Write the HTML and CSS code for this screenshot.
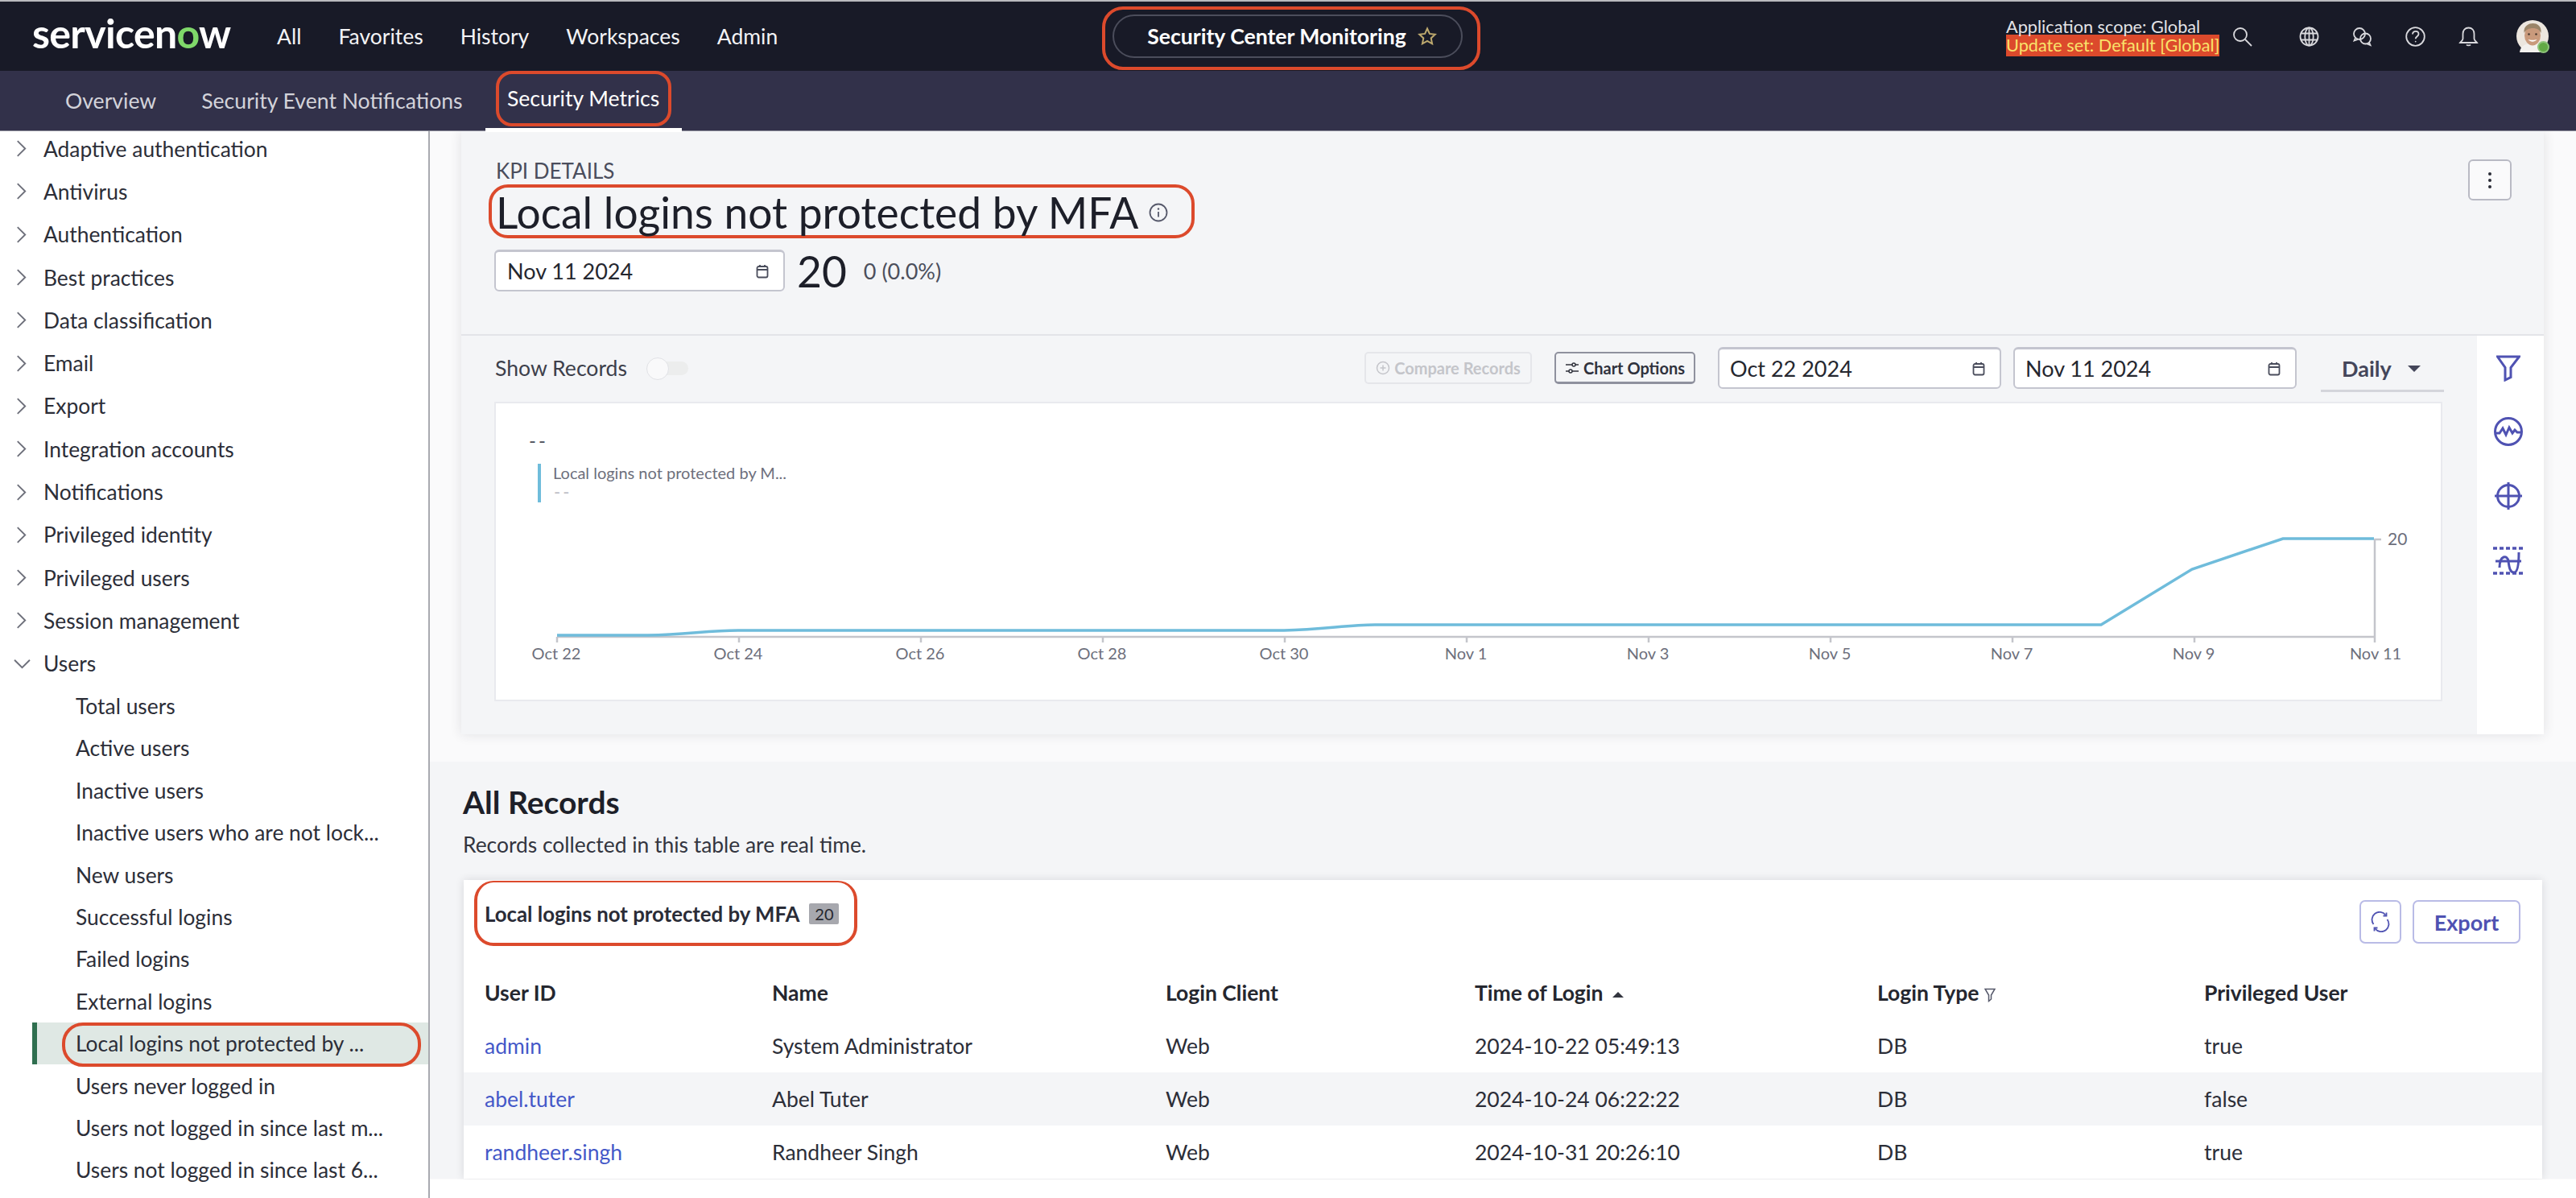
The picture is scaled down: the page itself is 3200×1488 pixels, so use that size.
FILE: index.html
```html
<!DOCTYPE html>
<html lang="en">
<head>
<meta charset="utf-8">
<title>Security Center Monitoring</title>
<link rel="stylesheet" href="styles.css">
</head>
<body>
<header class="topbar">
  <div class="top-left">
    <div class="logo">servicen<span class="logo-o">o</span>w</div>
    <nav class="top-nav"><a>All</a><a>Favorites</a><a>History</a><a>Workspaces</a><a>Admin</a></nav>
  </div>
  <div class="top-center">
    <div class="pill">
      <span>Security Center Monitoring</span>
      <svg class="star" viewBox="0 0 24 24"><path d="M12 2.5l2.9 6.4 6.9.8-5.1 4.7 1.4 6.9-6.1-3.5-6.1 3.5 1.4-6.9-5.1-4.7 6.9-.8z"/></svg>
    </div>
  </div>
  <div class="top-right">
    <div class="scope">
      <div class="scope-app">Application scope: Global</div>
      <div class="scope-set">Update set: Default [Global]</div>
    </div>
    <svg class="ticon ticon-search" viewBox="0 0 25 25"><circle cx="10" cy="10" r="8"/><path d="M16 16l8 8"/></svg>
    <svg class="ticon" viewBox="0 0 25 25"><circle cx="12.5" cy="12.5" r="11"/><ellipse cx="12.5" cy="12.5" rx="5.2" ry="11"/><path d="M2 8.5h21M2 16.5h21M12.5 1.5v22"/></svg>
    <svg class="ticon" viewBox="0 0 25 25"><circle cx="9" cy="9" r="7"/><path d="M4 14l-1.5 3.5L7 16"/><circle cx="16.5" cy="15" r="6.5"/><path d="M21 19.5l1.5 3.5-4-1.7"/></svg>
    <svg class="ticon" viewBox="0 0 25 25"><circle cx="12.5" cy="12.5" r="11.3"/><path d="M9 9.5c0-5 7.5-4.6 7.5-.3 0 3-3.8 3-3.8 6"/><circle class="dot" cx="12.7" cy="18.6" r=".9"/></svg>
    <svg class="ticon ticon-bell" viewBox="0 0 25 25"><path d="M12.5 1.5c-4.4 0-7 3.200-7 7.500v6c0 2.300-2.300 3.200-3.500 5h21c-1.200-1.800-3.500-2.700-3.500-5V9c0-4.300-2.600-7.500-7-7.500z"/><path d="M10 22.500c1 1.200 4 1.200 5 0"/></svg>
    <div class="avatar">
      <svg viewBox="0 0 40 40">
        <circle cx="20" cy="20" r="20" fill="#ece6de"/>
        <path d="M4 40c1-9 8-11 16-11s15 2 16 11z" fill="#f3f1ee"/>
        <ellipse cx="20" cy="19" rx="10" ry="12.500" fill="#c99a7c"/>
        <path d="M9.500 16c-1-9 6-12 11-12s11 3 10 12c-2-4-5-6-10-6s-9 2-11 6z" fill="#9a8468"/>
        <path d="M14.500 24c3 3.500 8 3.500 11 0-2 1-9 1-11 0z" fill="#fff"/>
        <circle cx="15.500" cy="17.500" r="1.300" fill="#4a3a30"/><circle cx="24.500" cy="17.500" r="1.300" fill="#4a3a30"/>
      </svg>
      <span class="avatar-badge"></span>
    </div>
  </div>
</header>

<div class="subnav">
  <a class="tab">Overview</a>
  <a class="tab">Security Event Notifications</a>
  <a class="tab tab-active"><span class="ring ring-tab">Security Metrics</span></a>
</div>

<div class="body-row">
  <aside class="sidebar">
    <div class="parent"><svg class="chev" viewBox="0 0 12 20"><path d="M1.500 1l9 9-9 9"/></svg>Adaptive authentication</div>
    <div class="parent"><svg class="chev" viewBox="0 0 12 20"><path d="M1.500 1l9 9-9 9"/></svg>Antivirus</div>
    <div class="parent"><svg class="chev" viewBox="0 0 12 20"><path d="M1.500 1l9 9-9 9"/></svg>Authentication</div>
    <div class="parent"><svg class="chev" viewBox="0 0 12 20"><path d="M1.500 1l9 9-9 9"/></svg>Best practices</div>
    <div class="parent"><svg class="chev" viewBox="0 0 12 20"><path d="M1.500 1l9 9-9 9"/></svg>Data classification</div>
    <div class="parent"><svg class="chev" viewBox="0 0 12 20"><path d="M1.500 1l9 9-9 9"/></svg>Email</div>
    <div class="parent"><svg class="chev" viewBox="0 0 12 20"><path d="M1.500 1l9 9-9 9"/></svg>Export</div>
    <div class="parent"><svg class="chev" viewBox="0 0 12 20"><path d="M1.500 1l9 9-9 9"/></svg>Integration accounts</div>
    <div class="parent"><svg class="chev" viewBox="0 0 12 20"><path d="M1.500 1l9 9-9 9"/></svg>Notifications</div>
    <div class="parent"><svg class="chev" viewBox="0 0 12 20"><path d="M1.500 1l9 9-9 9"/></svg>Privileged identity</div>
    <div class="parent"><svg class="chev" viewBox="0 0 12 20"><path d="M1.500 1l9 9-9 9"/></svg>Privileged users</div>
    <div class="parent"><svg class="chev" viewBox="0 0 12 20"><path d="M1.500 1l9 9-9 9"/></svg>Session management</div>
    <div class="parent"><svg class="chev chev-open" viewBox="0 0 20 12"><path d="M1 1.500l9 9 9-9"/></svg>Users</div>
    <div class="child">Total users</div>
    <div class="child">Active users</div>
    <div class="child">Inactive users</div>
    <div class="child">Inactive users who are not lock...</div>
    <div class="child">New users</div>
    <div class="child">Successful logins</div>
    <div class="child">Failed logins</div>
    <div class="child">External logins</div>
    <div class="child child-active">Local logins not protected by ...<span class="ring-side"></span></div>
    <div class="child">Users never logged in</div>
    <div class="child">Users not logged in since last m...</div>
    <div class="child">Users not logged in since last 6...</div>
  </aside>

  <main class="main">
    <section class="panel">
      <div class="kpi-head">
        <div class="kpi-info">
          <div class="eyebrow">KPI DETAILS</div>
          <div class="ring ring-title">
            <h1>Local logins not protected by MFA</h1>
            <svg class="info" viewBox="0 0 24 24"><circle cx="12" cy="12" r="10.500"/><path d="M12 11v6.500"/><circle class="dot" cx="12" cy="7.500" r="1.200"/></svg>
          </div>
          <div class="kpi-value">
            <div class="date date-kpi"><span>Nov 11 2024</span><svg class="cal" viewBox="0 0 16 18"><rect x="1.500" y="3" width="13" height="13.500" rx="2"/><path d="M1.500 7h13M5 1v3M11 1v3"/></svg></div>
            <span class="bignum">20</span>
            <span class="delta">0 (0.0%)</span>
          </div>
        </div>
        <button class="kebab"><span></span><span></span><span></span></button>
      </div>

      <div class="chart-row">
        <div class="chart-col">
          <div class="toolbar">
            <span class="show-label">Show Records</span>
            <span class="toggle"></span>
            <button class="btn btn-disabled"><svg viewBox="0 0 18 18"><circle cx="9" cy="9" r="7.500"/><path d="M9 5.500v7M5.500 9h7"/></svg>Compare Records</button>
            <button class="btn btn-options"><svg viewBox="0 0 18 18"><path d="M1 5h8M13 5h4M1 13h4M9 13h8"/><circle cx="11" cy="5" r="2"/><circle cx="7" cy="13" r="2"/></svg>Chart Options</button>
            <div class="date date-range"><span>Oct 22 2024</span><svg class="cal" viewBox="0 0 16 18"><rect x="1.500" y="3" width="13" height="13.500" rx="2"/><path d="M1.500 7h13M5 1v3M11 1v3"/></svg></div>
            <div class="date date-range date-end"><span>Nov 11 2024</span><svg class="cal" viewBox="0 0 16 18"><rect x="1.500" y="3" width="13" height="13.500" rx="2"/><path d="M1.500 7h13M5 1v3M11 1v3"/></svg></div>
            <div class="daily"><span>Daily</span><i class="caret"></i></div>
          </div>
          <div class="chart-card">
            <svg class="chart" viewBox="0 0 2420 372">
              <text class="c-dash" x="43" y="57">--</text>
              <rect class="c-legend" x="54" y="77" width="4" height="48"/>
              <text class="c-legend-t" x="73" y="96">Local logins not protected by M...</text>
              <text class="c-dash2" x="74" y="120">--</text>
              <path class="c-axis" d="M78 292H2336V170M78 292v7M304 292v7M530 292v7M756 292v7M982 292v7M1208 292v7M1434 292v7M1660 292v7M1886 292v7M2112 292v7M2336 292v7M2336 171h8"/>
              <path class="c-line" d="M78 290H191C240 289 265 284 303 284H981C1030 283 1060 277 1094 277H1996L2109 208 2222 170H2335"/>
              <g class="c-lab">
                <text x="77" y="320">Oct 22</text><text x="303" y="320">Oct 24</text><text x="529" y="320">Oct 26</text><text x="755" y="320">Oct 28</text><text x="981" y="320">Oct 30</text><text x="1207" y="320">Nov 1</text><text x="1433" y="320">Nov 3</text><text x="1659" y="320">Nov 5</text><text x="1885" y="320">Nov 7</text><text x="2111" y="320">Nov 9</text><text x="2337" y="320">Nov 11</text>
              </g>
              <text class="c-y" x="2352" y="178">20</text>
            </svg>
          </div>
        </div>
        <div class="rail">
          <svg class="r-filter" viewBox="0 0 30 33"><path d="M1.500 2h27L18 15.500v12l-7 3.500V15.500z"/></svg>
          <svg class="r-icon" viewBox="0 0 36 36"><circle cx="18" cy="18" r="16.500"/><path d="M2 20h5l4-6 4 8 4-9 4 7 3-4 3 3h5"/></svg>
          <svg class="r-icon" viewBox="0 0 36 36"><circle cx="18" cy="18" r="13.500"/><path d="M18 1v34M1 18h34"/></svg>
          <svg class="r-icon r-band" viewBox="0 0 38 37"><path class="r-dash" d="M0 3h38M0 34h38"/><path d="M3 19h32"/><path d="M8 27c0-16 10-16 11-8s2 14 7 14 6-12 6-25" /></svg>
        </div>
      </div>
    </section>

    <section class="records">
      <h2>All Records</h2>
      <p>Records collected in this table are real time.</p>
      <div class="card">
        <div class="card-head">
          <div class="ring ring-card"><strong>Local logins not protected by MFA</strong><span class="count">20</span></div>
          <div class="card-actions">
            <button class="ghost ghost-icon"><svg viewBox="0 0 26 26"><path d="M4.500 16a9 9 0 0 1 15-11.500M21.500 10a9 9 0 0 1-15 11.500"/><path d="M20.500 1.500v4h-4M5.500 24.500v-4h4"/></svg></button>
            <button class="ghost ghost-text">Export</button>
          </div>
        </div>
        <table>
          <colgroup><col class="c1"><col class="c2"><col class="c3"><col class="c4"><col class="c5"><col class="c6"></colgroup>
          <thead>
            <tr>
              <th>User ID</th><th>Name</th><th>Login Client</th>
              <th>Time of Login <i class="sort"></i></th>
              <th>Login Type <svg class="th-filter" viewBox="0 0 14 18"><path d="M1 1.500h12L8.500 9v5l-3 2.500V9z"/></svg></th>
              <th>Privileged User</th>
            </tr>
          </thead>
          <tbody>
            <tr><td><a>admin</a></td><td>System Administrator</td><td>Web</td><td>2024-10-22 05:49:13</td><td>DB</td><td>true</td></tr>
            <tr class="alt"><td><a>abel.tuter</a></td><td>Abel Tuter</td><td>Web</td><td>2024-10-24 06:22:22</td><td>DB</td><td>false</td></tr>
            <tr><td><a>randheer.singh</a></td><td>Randheer Singh</td><td>Web</td><td>2024-10-31 20:26:10</td><td>DB</td><td>true</td></tr>
          </tbody>
        </table>
      </div>
    </section>
  </main>
</div>
</body>
</html>
```

FILE: styles.css
```css
* { box-sizing: border-box; }
html, body { margin: 0; height: 100%; }
body {
  width: 3200px; height: 1488px; overflow: hidden;
  font-family: "Lato", "Liberation Sans", sans-serif;
  color: #25272f; background: #fff;
  display: flex; flex-direction: column;
  -webkit-font-smoothing: antialiased;
}
h1, h2, p { margin: 0; font-weight: 400; }
button { font-family: inherit; }

/* Top bar */
.topbar {
  height: 88px; flex: none;
  background: #181a27; color: #fff;
  border-top: 2px solid #b9babd;
  display: grid; grid-template-columns: 1369px 470px 1fr;
}
.top-left { display: flex; align-items: center; padding-left: 40px; }
.logo { font-size: 50px; font-weight: 700; letter-spacing: -.7px; line-height: 1; margin-top: -8px; width: 304px; white-space: nowrap; }
.logo-o { color: #7fd86a; }
.top-nav { display: flex; gap: 46px; font-size: 26.500px; color: #f3f3f5; }
.top-center { padding-top: 6px; }
.pill {
  width: 470px; height: 79px;
  border: 4px solid #dc4a2c; border-radius: 26px;
  padding: 6px 22px 6px 24px;
  position: relative;
  display: flex; align-items: center; justify-content: center; gap: 14px;
  font-size: 26.600px; font-weight: 700; white-space: nowrap;
}
.pill::before {
  content: ""; position: absolute; left: 9px; right: 18px; top: 6px; bottom: 11px;
  border: 2px solid #4b4d5b; border-radius: 27px;
}
.pill span, .pill svg { position: relative; top: -3px; }
.star { width: 24px; height: 24px; fill: none; stroke: #bda96e; stroke-width: 2; }
.top-right { display: flex; align-items: center; justify-content: flex-end; gap: 41px; padding-right: 34px; }
.scope { width: 265px; margin-right: -25px; font-size: 21.700px; line-height: 26px; white-space: nowrap; }
.scope-app { color: #e3e3e6; height: 23px; }
.scope-set { background: #dc4a2c; color: #f9e26a; height: 27px; }
.ticon { width: 25px; height: 25px; flex: none; fill: none; stroke: #d9d9dd; stroke-width: 1.800; }
.ticon .dot { fill: #d9d9dd; stroke: none; }
.ticon-search { margin-right: 17px; }
.ticon-bell { margin-right: 6px; }
.avatar { width: 40px; height: 40px; position: relative; flex: none; }
.avatar svg { display: block; width: 40px; height: 40px; }
.avatar-badge { position: absolute; right: -1px; bottom: -1px; width: 15px; height: 15px; background: #62a945; border-radius: 50%; border: 2px solid #8ec47b; }

/* Sub navigation */
.subnav {
  height: 75px; flex: none;
  background: #32314a;
  border-bottom: 1px solid #8e8f9b;
  display: flex; align-items: stretch;
  font-size: 26.600px; color: #d3d3da;
  position: relative;
}
.tab { display: flex; align-items: center; margin-left: 56px; white-space: nowrap; }
.tab:first-child { margin-left: 81px; }
.tab-active { margin-left: 28px; width: 244px; position: relative; justify-content: center; color: #fff; }
.tab-active::after { content: ""; position: absolute; left: 0; right: 0; bottom: -2px; height: 5px; background: #fff; }
.ring { border: 4px solid #dc4a2c; }
.ring-tab { height: 69px; margin-top: -6px; padding: 0 10px; display: flex; align-items: center; border-radius: 20px; width: 218px; justify-content: center; }

/* Layout */
.body-row { flex: 1; display: flex; min-height: 0; }
.sidebar {
  width: 534px; flex: none;
  border-right: 2px solid #a9aab0;
  overflow: hidden; font-size: 26.400px; color: #2c2e38;
}
.parent { height: 53.300px; display: flex; align-items: center; padding-left: 54px; position: relative; white-space: nowrap; }
.chev { position: absolute; left: 20px; width: 13px; height: 21px; fill: none; stroke: #6d6f7a; stroke-width: 1.800; }
.chev-open { width: 21px; height: 13px; left: 17px; }
.parent:first-child { margin-top: -5px; }
.child { height: 52.400px; display: flex; align-items: center; padding-left: 94px; white-space: nowrap; position: relative; }
.child-active { background: #dfe8e4; margin-left: 40px; border-left: 6px solid #2f6f4f; padding-left: 48px; }
.ring-side { position: absolute; left: 31px; top: 0; width: 446px; height: 55px; border: 4px solid #dc4a2c; border-radius: 26px; }

.main {
  flex: 1; height: 1302px; overflow: hidden; min-width: 0;
  background: #fafafb;
  padding-left: 39px;
}
.panel {
  width: 2587px; background: #f4f5f7;
  box-shadow: 0 0 14px rgba(40, 40, 60, .12);
}
.kpi-head { height: 254px; display: flex; justify-content: space-between; padding: 37px 40px 0 41px; border-bottom: 2px solid #e3e4e8; }
.eyebrow { font-size: 26px; color: #4a4d5c; line-height: 24px; margin-left: 2px; }
.ring-title { margin: 5px 0 0 -7px; width: 877px; height: 67px; border-radius: 24px; display: flex; align-items: center; padding-left: 5px; gap: 13px; }
h1 { font-size: 53.300px; color: #1d1f29; line-height: 58px; white-space: nowrap; }
.info { width: 24px; height: 24px; flex: none; fill: none; stroke: #55586a; stroke-width: 1.800; margin-top: 3px; }
.info .dot { fill: #55586a; stroke: none; }
.kpi-value { display: flex; align-items: center; margin-top: 14px; }
.date {
  background: #fff; border: 2px solid #c4c5cf; border-top-width: 3px; border-radius: 6px;
  display: flex; align-items: center; justify-content: space-between;
  font-size: 27px; color: #25272f; white-space: nowrap;
}
.date-kpi { width: 361px; height: 52px; padding: 0 18px 0 14px; }
.cal { width: 16px; height: 18px; fill: none; stroke: #4a4d5c; stroke-width: 1.800; }
.bignum { font-size: 53.300px; margin-left: 15px; line-height: 52px; color: #1d1f29; }
.delta { font-size: 27px; margin-left: 21px; color: #4c4f5c; }
.kebab { width: 54px; height: 51px; margin-top: -2px; background: #fafafb; border: 2px solid #b9bac4; border-radius: 6px; display: flex; flex-direction: column; align-items: center; justify-content: center; gap: 4px; padding: 0; }
.kebab span { width: 4px; height: 4px; border-radius: 50%; background: #2a2c37; }

.chart-row { display: flex; }
.chart-col { width: 2504px; padding-bottom: 41px; }
.toolbar { height: 80px; display: flex; align-items: center; padding: 0 41px 0 42px; }
.show-label { font-size: 26.600px; color: #3d3f4b; }
.toggle { width: 52px; height: 17px; margin-left: 24px; background: #eceded; border-radius: 9px; position: relative; }
.toggle::before { content: ""; position: absolute; left: 0; top: -5px; width: 26px; height: 26px; background: #f9f9fa; border: 1px solid #e1e2e6; border-radius: 50%; }
.btn { height: 40px; border-radius: 5px; background: transparent; display: flex; align-items: center; justify-content: center; gap: 5px; font-size: 20px; font-weight: 700; padding: 0; white-space: nowrap; }
.btn svg { width: 18px; height: 18px; fill: none; stroke-width: 1.500; flex: none; }
.btn-disabled { width: 208px; margin-left: auto; border: 2px solid #e5e6ea; color: #c4c5ca; }
.btn-disabled svg { stroke: #c4c5ca; }
.btn-options { width: 175px; margin-left: 28px; border: 2px solid #8f919e; border-bottom-width: 3px; color: #30323d; }
.btn-options svg { stroke: #30323d; }
.date-range { width: 352px; height: 52px; padding: 0 18px 0 13px; margin-left: 28px; }
.date-end { margin-left: 15px; }
.daily { width: 153px; height: 56px; margin-left: 30px; padding: 0 0 0 26px; border-bottom: 3px solid #d4d5db; display: flex; align-items: center; gap: 20px; font-size: 27px; font-weight: 700; color: #44465a; margin-top: 4px; }
.caret { width: 0; height: 0; border: 8px solid transparent; border-top: 8px solid #44465a; border-bottom: 0; }
.chart-card { margin: 2px 43px 0 41px; height: 372px; background: #fff; border: 2px solid #e9eaee; }
.chart { display: block; width: 2420px; height: 372px; margin: -2px; font-family: "Lato", "Liberation Sans", sans-serif; }
.c-dash { font-size: 24px; fill: #4a4c58; letter-spacing: 3px; }
.c-dash2 { font-size: 22px; fill: #b9bac2; letter-spacing: 3px; }
.c-legend { fill: #6fbcdb; }
.c-legend-t { font-size: 20px; fill: #6d6f7c; }
.c-axis { fill: none; stroke: #c4c5cb; stroke-width: 2.500; }
.c-line { fill: none; stroke: #6fbcdb; stroke-width: 3.500; }
.c-lab text { font-size: 20px; fill: #6d6f7c; text-anchor: middle; }
.c-y { font-size: 21px; fill: #6d6f7c; }
.rail { width: 83px; background: #fff; display: flex; flex-direction: column; align-items: center; padding: 24px 5px 0 0; gap: 44px; }
.rail svg { fill: none; stroke: #4f52b2; stroke-width: 3; flex: none; }
.r-filter { width: 30px; height: 33px; }
.r-icon { width: 36px; height: 36px; }
.r-band { width: 38px; height: 37px; }
.r-dash { stroke-dasharray: 5 3; stroke-width: 3.500; }

/* Records */
.records { margin: 34px 0 0 -39px; padding: 26px 42px 0 39px; width: 2666px; background: #f4f5f7; }
h2 { font-size: 39px; font-weight: 700; line-height: 48px; color: #1d1f29; margin-left: 2px; }
.records p { font-size: 26.400px; line-height: 32px; margin: 13px 0 0 2px; color: #33353f; }
.card { margin-top: 28px; background: #fff; box-shadow: 0 0 10px rgba(40, 40, 60, .14); margin-left: 3px; }
.card-head { display: flex; justify-content: space-between; align-items: flex-start; padding: 1px 27px 25px 13px; }
.ring-card { width: 476px; height: 81px; border-radius: 24px; border-top-width: 2px; display: flex; align-items: center; padding: 2px 0 0 9px; gap: 12px; }
.ring-card strong { font-size: 25.800px; color: #2a2c37; white-space: nowrap; }
.count { width: 37px; height: 26px; background: #a7a8ae; border-radius: 2px; font-size: 20px; color: #25272f; text-align: center; line-height: 26px; flex: none; }
.card-actions { display: flex; gap: 14px; margin-top: 24px; }
.ghost { height: 54px; background: #fff; border: 2px solid #b9bbe6; border-radius: 7px; color: #4f52b2; padding: 0; display: flex; align-items: center; justify-content: center; }
.ghost-icon { width: 52px; }
.ghost-icon svg { width: 26px; height: 26px; fill: none; stroke: #4f52b2; stroke-width: 1.800; }
.ghost-text { width: 134px; font-size: 27px; font-weight: 700; }
table { border-collapse: collapse; table-layout: fixed; width: 100%; font-size: 26.500px; color: #2c2e38; }
.c1 { width: 357px; } .c2 { width: 489px; } .c3 { width: 384px; } .c4 { width: 500px; } .c5 { width: 406px; }
th { height: 66px; text-align: left; font-weight: 700; padding: 0 0 0 26px; color: #25272f; font-size: 26.500px; white-space: nowrap; }
td { height: 66px; padding: 0 0 0 26px; white-space: nowrap; }
td a { color: #4458c8; }
.alt td { background: #f4f5f7; }
.sort { display: inline-block; width: 0; height: 0; margin-left: 5px; vertical-align: 4px; border: 7px solid transparent; border-bottom: 7px solid #33353f; border-top: 0; }
.th-filter { width: 14px; height: 18px; fill: none; stroke: #55586a; stroke-width: 1.500; vertical-align: -2px; }
```
